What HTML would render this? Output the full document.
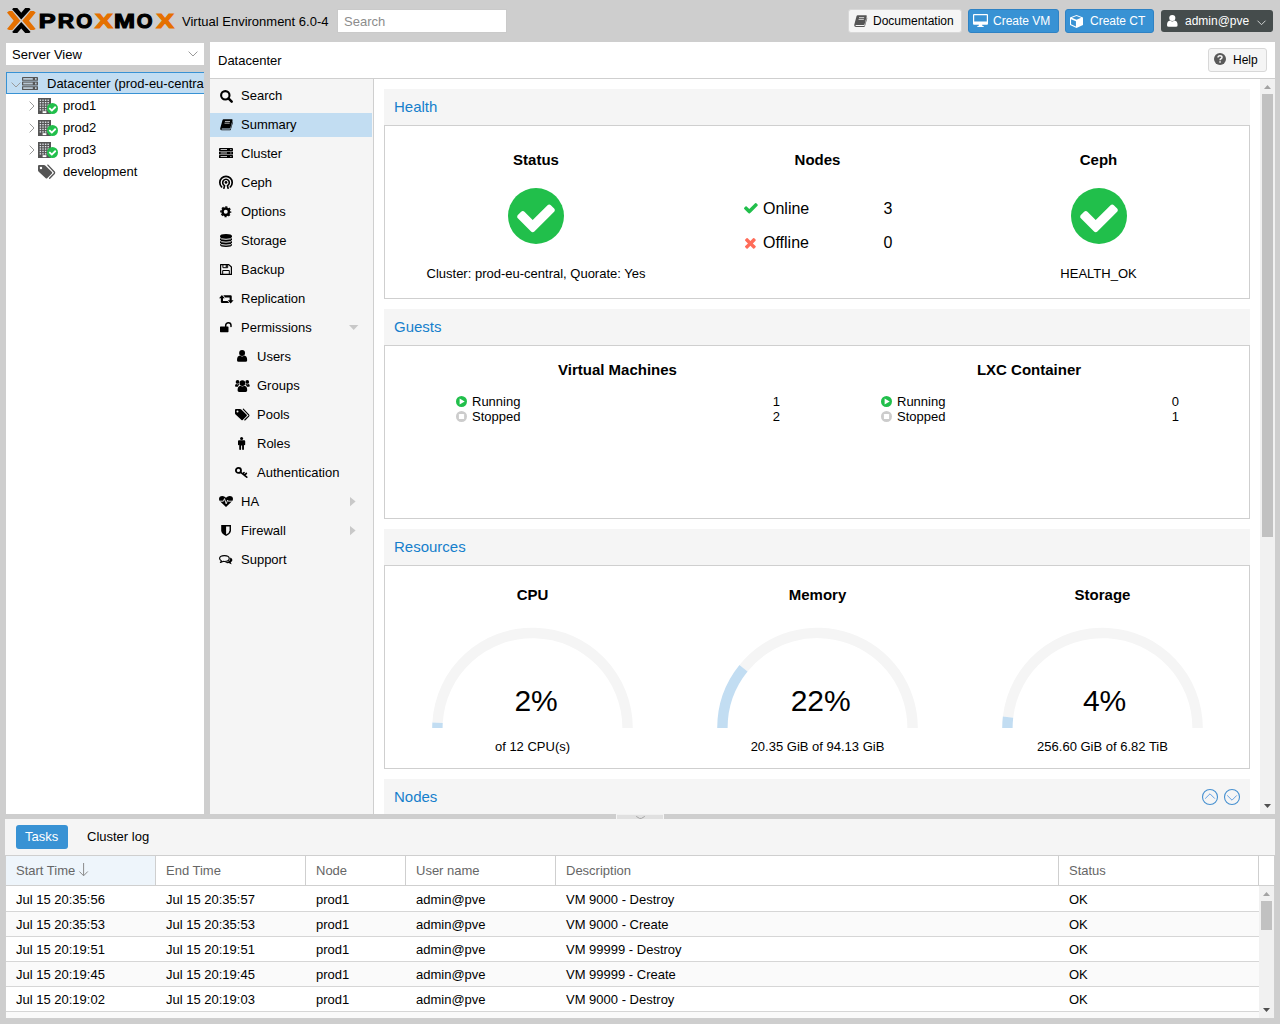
<!DOCTYPE html>
<html lang="en">
<head>
<meta charset="utf-8">
<title>prod1 - Proxmox Virtual Environment</title>
<style>
*{box-sizing:border-box;margin:0;padding:0}
html,body{width:1280px;height:1024px;overflow:hidden}
body{background:#cecece;font-family:"Liberation Sans",Arial,Helvetica,sans-serif;font-size:13px;color:#000;position:relative}
.t{position:absolute;white-space:nowrap}
.b{position:absolute}
.i{position:absolute;display:block;overflow:visible;fill:currentColor}
</style>
</head>
<body>
<svg class="i" style="left:0px;top:0px;" width="180" height="42" viewBox="0 0 180 42" preserveAspectRatio="none"><path d="M7 12.6L9 10.9H12.3L20.3 20.75L12.3 30.1H9L7 28.9L13.7 20.75zM35.7 12.6L33.7 10.9H30.4L22.3 20.75L30.4 30.1H33.7L35.7 28.9L29 20.75z" fill="#e57000"/><path d="M12.1 9.2L13.4 7.9H17.3L21.25 12.8L25.2 7.9H29.2L30.6 9.2L21.25 19.4zM12.1 32L13.4 33.1H17.3L21.25 28.4L25.2 33.1H29.2L30.6 32L21.25 21.9z" fill="#000"/><text y="28.05" font-family='"Liberation Sans",Arial,sans-serif' font-weight="bold" font-size="20" stroke-width="1.15"><tspan x="38.83" textLength="16.84" lengthAdjust="spacingAndGlyphs" fill="#000" stroke="#000">P</tspan><tspan x="57.77" textLength="16.33" lengthAdjust="spacingAndGlyphs" fill="#000" stroke="#000">R</tspan><tspan x="76.36" textLength="15.97" lengthAdjust="spacingAndGlyphs" fill="#000" stroke="#000">O</tspan><tspan x="94.99" textLength="17.7" lengthAdjust="spacingAndGlyphs" fill="#e57000" stroke="#e57000">X</tspan><tspan x="114.12" textLength="21.01" lengthAdjust="spacingAndGlyphs" fill="#000" stroke="#000">M</tspan><tspan x="136.87" textLength="15.74" lengthAdjust="spacingAndGlyphs" fill="#000" stroke="#000">O</tspan><tspan x="156.46" textLength="17.36" lengthAdjust="spacingAndGlyphs" fill="#e57000" stroke="#e57000">X</tspan></text></svg>
<div class="t" style="top:14px;font-size:13px;line-height:15px;left:182px;">Virtual Environment 6.0-4</div>
<div class="b" style="left:338px;top:10px;width:168px;height:22px;background:#fff;box-shadow:0 0 0 1px #cacaca;"></div>
<div class="t" style="top:14px;font-size:13px;line-height:15px;color:#8c8c8c;left:344px;">Search</div>
<div class="b" style="left:848px;top:9px;width:114px;height:24px;background:#f5f5f5;border:1px solid #d8d8d8;border-radius:3px;"></div>
<div class="t" style="top:14px;font-size:12px;line-height:14px;color:#000;left:873px;">Documentation</div>
<svg class="i" style="left:853.5px;top:14.7px;color:#555;" width="13" height="12" viewBox="0 0 13 12" preserveAspectRatio="none"><path d="M3.6 0.3H12q1 0 .75 1L10.6 9.2q-.2.8-1 .8H2.2q-.7 0-.7.55t.7.55H9.9q.5 0 .7-.5L12.9 2.3q.5.6.25 1.4L11 11q-.25.9-1.2.9H1.9Q.2 11.9.2 10.3q0-.5.2-1L2.5 1.2Q2.8.3 3.6.3z"/><path d="M5 2.6h5.2M4.6 4.4h5.2" stroke="#fff" stroke-opacity=".8" stroke-width=".9" fill="none"/></svg>
<div class="b" style="left:968px;top:9px;width:91px;height:24px;background:#3892d4;border:1px solid #2e82c4;border-radius:3px;"></div>
<div class="t" style="top:14px;font-size:12px;line-height:14px;color:#fff;left:993px;">Create VM</div>
<svg class="i" style="left:973px;top:14px;color:#fff;" width="15" height="13" viewBox="0 0 15 13" preserveAspectRatio="none"><path d="M1 0H14Q15 0 15 1V9.7Q15 10.7 14 10.7H9.1L9.5 11.9H10.3Q10.8 11.9 10.8 12.45T10.3 13H4.7Q4.2 13 4.2 12.45T4.7 11.9H5.5L5.9 10.7H1Q0 10.7 0 9.7V1Q0 0 1 0zM1.2 1.2V7.6H13.8V1.2z" fill-rule="evenodd"/></svg>
<div class="b" style="left:1065px;top:9px;width:89px;height:24px;background:#3892d4;border:1px solid #2e82c4;border-radius:3px;"></div>
<div class="t" style="top:14px;font-size:12px;line-height:14px;color:#fff;left:1090px;">Create CT</div>
<svg class="i" style="left:1070px;top:15px;color:#fff;" width="13" height="13" viewBox="0 0 13 13" preserveAspectRatio="none"><path d="M6.5 0L13 2.6V9.9L6.5 13L0 9.9V2.6z"/><path d="M1.9 2.85L6.5 1.05L11.1 2.85L6.5 4.7z" fill="#3892d4"/><path d="M1.05 4.2L5.95 6.2V11.55L1.05 9.2z" fill="#3892d4"/></svg>
<div class="b" style="left:1161px;top:10px;width:112px;height:22px;background:#454c4c;border-radius:3px;"></div>
<div class="t" style="top:14px;font-size:12px;line-height:14px;color:#fff;left:1185px;">admin@pve</div>
<svg class="i" style="left:1167px;top:15.2px;color:#fff;" width="10.6" height="12" viewBox="0 0 10 12" preserveAspectRatio="none"><circle cx="5" cy="3" r="2.9"/><path d="M0 10.2Q0 6 3 5.6Q4 6.5 5 6.5T7 5.6Q10 6 10 10.2Q10 11.8 8.4 11.8H1.6Q0 11.8 0 10.2z"/></svg>
<svg class="i" style="left:1257px;top:19.6px;" width="9" height="6" viewBox="0 0 9 6" preserveAspectRatio="none"><path d="M.5 .7L4.5 4.7L8.5 .7" fill="none" stroke="#cfd2d2" stroke-width="1"/></svg>
<div class="b" style="left:6px;top:43px;width:198px;height:22px;background:#fff;"></div>
<div class="t" style="top:47px;font-size:13px;line-height:15px;left:12px;">Server View</div>
<svg class="i" style="left:188px;top:50.5px;" width="10" height="6" viewBox="0 0 10 6" preserveAspectRatio="none"><path d="M.6 .6L5 5L9.4 .6" fill="none" stroke="#9a9a9a" stroke-width="1"/></svg>
<div class="b" style="left:6px;top:72px;width:198px;height:742px;background:#fff;"></div>
<div class="b" style="left:6px;top:72px;width:198px;height:22px;background:#c2ddf2;border:1px solid #3892d4;border-right:none;"></div>
<svg class="i" style="left:11px;top:81.5px;" width="10" height="6" viewBox="0 0 10 6" preserveAspectRatio="none"><path d="M.6 .6L5 5L9.4 .6" fill="none" stroke="#9a9a9a" stroke-width="1"/></svg>
<svg class="i" style="left:22px;top:77px;" width="16" height="13" viewBox="0 0 16 13" preserveAspectRatio="none"><rect x="0" y="0" width="16" height="3.8" rx=".4" fill="#555"/><rect x="1.2" y="1" width="9.6" height="1.8" fill="#b9c7d3"/><rect x="13" y="1" width="1.6" height="1.8" fill="#b9c7d3"/><rect x="0" y="4.6" width="16" height="3.8" rx=".4" fill="#555"/><rect x="1.2" y="5.6" width="9.6" height="1.8" fill="#b9c7d3"/><rect x="13" y="5.6" width="1.6" height="1.8" fill="#b9c7d3"/><rect x="0" y="9.2" width="16" height="3.8" rx=".4" fill="#555"/><rect x="1.2" y="10.2" width="9.6" height="1.8" fill="#b9c7d3"/><rect x="13" y="10.2" width="1.6" height="1.8" fill="#b9c7d3"/></svg>
<div class="t" style="top:76px;font-size:13px;line-height:15px;left:47px;width:157px;overflow:hidden;">Datacenter (prod-eu-central)</div>
<svg class="i" style="left:29px;top:101px;" width="6" height="10" viewBox="0 0 6 10" preserveAspectRatio="none"><path d="M.6 .6L5 5L.6 9.4" fill="none" stroke="#9a9a9a" stroke-width="1"/></svg>
<svg class="i" style="left:38px;top:98px;" width="13" height="16" viewBox="0 0 13 16" preserveAspectRatio="none"><rect x="0" y="0" width="13" height="16" fill="#555"/><rect x="1.7" y="1.6" width="1.4" height="1.3" fill="#e4e9ee"/><rect x="4.3" y="1.6" width="1.4" height="1.3" fill="#e4e9ee"/><rect x="6.9" y="1.6" width="1.4" height="1.3" fill="#e4e9ee"/><rect x="9.5" y="1.6" width="1.4" height="1.3" fill="#e4e9ee"/><rect x="1.7" y="4" width="1.4" height="1.3" fill="#e4e9ee"/><rect x="4.3" y="4" width="1.4" height="1.3" fill="#e4e9ee"/><rect x="6.9" y="4" width="1.4" height="1.3" fill="#e4e9ee"/><rect x="9.5" y="4" width="1.4" height="1.3" fill="#e4e9ee"/><rect x="1.7" y="6.4" width="1.4" height="1.3" fill="#e4e9ee"/><rect x="4.3" y="6.4" width="1.4" height="1.3" fill="#e4e9ee"/><rect x="6.9" y="6.4" width="1.4" height="1.3" fill="#e4e9ee"/><rect x="9.5" y="6.4" width="1.4" height="1.3" fill="#e4e9ee"/><rect x="1.7" y="8.8" width="1.4" height="1.3" fill="#e4e9ee"/><rect x="4.3" y="8.8" width="1.4" height="1.3" fill="#e4e9ee"/><rect x="6.9" y="8.8" width="1.4" height="1.3" fill="#e4e9ee"/><rect x="9.5" y="8.8" width="1.4" height="1.3" fill="#e4e9ee"/><rect x="1.7" y="11.2" width="1.4" height="1.3" fill="#e4e9ee"/><rect x="4.3" y="11.2" width="1.4" height="1.3" fill="#e4e9ee"/><rect x="6.9" y="11.2" width="1.4" height="1.3" fill="#e4e9ee"/><rect x="9.5" y="11.2" width="1.4" height="1.3" fill="#e4e9ee"/><rect x="4.6" y="13.2" width="3.8" height="1.9" fill="#fff"/></svg>
<svg class="i" style="left:46.9px;top:103px;" width="11" height="11" viewBox="0 0 1536 1536" preserveAspectRatio="none"><circle cx="768" cy="768" r="768" fill="#21bf4b"/><path transform="translate(-128,-128)" fill="#fff" d="M1412 734q0-28-18-46l-91-90q-19-19-45-19t-45 19l-408 407-226-226q-19-19-45-19t-45 19l-91 90q-18 18-18 46 0 27 18 45l362 362q19 19 45 19 27 0 46-19l543-543q18-18 18-45z"/></svg>
<div class="t" style="top:98px;font-size:13px;line-height:15px;left:63px;">prod1</div>
<svg class="i" style="left:29px;top:123px;" width="6" height="10" viewBox="0 0 6 10" preserveAspectRatio="none"><path d="M.6 .6L5 5L.6 9.4" fill="none" stroke="#9a9a9a" stroke-width="1"/></svg>
<svg class="i" style="left:38px;top:120px;" width="13" height="16" viewBox="0 0 13 16" preserveAspectRatio="none"><rect x="0" y="0" width="13" height="16" fill="#555"/><rect x="1.7" y="1.6" width="1.4" height="1.3" fill="#e4e9ee"/><rect x="4.3" y="1.6" width="1.4" height="1.3" fill="#e4e9ee"/><rect x="6.9" y="1.6" width="1.4" height="1.3" fill="#e4e9ee"/><rect x="9.5" y="1.6" width="1.4" height="1.3" fill="#e4e9ee"/><rect x="1.7" y="4" width="1.4" height="1.3" fill="#e4e9ee"/><rect x="4.3" y="4" width="1.4" height="1.3" fill="#e4e9ee"/><rect x="6.9" y="4" width="1.4" height="1.3" fill="#e4e9ee"/><rect x="9.5" y="4" width="1.4" height="1.3" fill="#e4e9ee"/><rect x="1.7" y="6.4" width="1.4" height="1.3" fill="#e4e9ee"/><rect x="4.3" y="6.4" width="1.4" height="1.3" fill="#e4e9ee"/><rect x="6.9" y="6.4" width="1.4" height="1.3" fill="#e4e9ee"/><rect x="9.5" y="6.4" width="1.4" height="1.3" fill="#e4e9ee"/><rect x="1.7" y="8.8" width="1.4" height="1.3" fill="#e4e9ee"/><rect x="4.3" y="8.8" width="1.4" height="1.3" fill="#e4e9ee"/><rect x="6.9" y="8.8" width="1.4" height="1.3" fill="#e4e9ee"/><rect x="9.5" y="8.8" width="1.4" height="1.3" fill="#e4e9ee"/><rect x="1.7" y="11.2" width="1.4" height="1.3" fill="#e4e9ee"/><rect x="4.3" y="11.2" width="1.4" height="1.3" fill="#e4e9ee"/><rect x="6.9" y="11.2" width="1.4" height="1.3" fill="#e4e9ee"/><rect x="9.5" y="11.2" width="1.4" height="1.3" fill="#e4e9ee"/><rect x="4.6" y="13.2" width="3.8" height="1.9" fill="#fff"/></svg>
<svg class="i" style="left:46.9px;top:125px;" width="11" height="11" viewBox="0 0 1536 1536" preserveAspectRatio="none"><circle cx="768" cy="768" r="768" fill="#21bf4b"/><path transform="translate(-128,-128)" fill="#fff" d="M1412 734q0-28-18-46l-91-90q-19-19-45-19t-45 19l-408 407-226-226q-19-19-45-19t-45 19l-91 90q-18 18-18 46 0 27 18 45l362 362q19 19 45 19 27 0 46-19l543-543q18-18 18-45z"/></svg>
<div class="t" style="top:120px;font-size:13px;line-height:15px;left:63px;">prod2</div>
<svg class="i" style="left:29px;top:145px;" width="6" height="10" viewBox="0 0 6 10" preserveAspectRatio="none"><path d="M.6 .6L5 5L.6 9.4" fill="none" stroke="#9a9a9a" stroke-width="1"/></svg>
<svg class="i" style="left:38px;top:142px;" width="13" height="16" viewBox="0 0 13 16" preserveAspectRatio="none"><rect x="0" y="0" width="13" height="16" fill="#555"/><rect x="1.7" y="1.6" width="1.4" height="1.3" fill="#e4e9ee"/><rect x="4.3" y="1.6" width="1.4" height="1.3" fill="#e4e9ee"/><rect x="6.9" y="1.6" width="1.4" height="1.3" fill="#e4e9ee"/><rect x="9.5" y="1.6" width="1.4" height="1.3" fill="#e4e9ee"/><rect x="1.7" y="4" width="1.4" height="1.3" fill="#e4e9ee"/><rect x="4.3" y="4" width="1.4" height="1.3" fill="#e4e9ee"/><rect x="6.9" y="4" width="1.4" height="1.3" fill="#e4e9ee"/><rect x="9.5" y="4" width="1.4" height="1.3" fill="#e4e9ee"/><rect x="1.7" y="6.4" width="1.4" height="1.3" fill="#e4e9ee"/><rect x="4.3" y="6.4" width="1.4" height="1.3" fill="#e4e9ee"/><rect x="6.9" y="6.4" width="1.4" height="1.3" fill="#e4e9ee"/><rect x="9.5" y="6.4" width="1.4" height="1.3" fill="#e4e9ee"/><rect x="1.7" y="8.8" width="1.4" height="1.3" fill="#e4e9ee"/><rect x="4.3" y="8.8" width="1.4" height="1.3" fill="#e4e9ee"/><rect x="6.9" y="8.8" width="1.4" height="1.3" fill="#e4e9ee"/><rect x="9.5" y="8.8" width="1.4" height="1.3" fill="#e4e9ee"/><rect x="1.7" y="11.2" width="1.4" height="1.3" fill="#e4e9ee"/><rect x="4.3" y="11.2" width="1.4" height="1.3" fill="#e4e9ee"/><rect x="6.9" y="11.2" width="1.4" height="1.3" fill="#e4e9ee"/><rect x="9.5" y="11.2" width="1.4" height="1.3" fill="#e4e9ee"/><rect x="4.6" y="13.2" width="3.8" height="1.9" fill="#fff"/></svg>
<svg class="i" style="left:46.9px;top:147px;" width="11" height="11" viewBox="0 0 1536 1536" preserveAspectRatio="none"><circle cx="768" cy="768" r="768" fill="#21bf4b"/><path transform="translate(-128,-128)" fill="#fff" d="M1412 734q0-28-18-46l-91-90q-19-19-45-19t-45 19l-408 407-226-226q-19-19-45-19t-45 19l-91 90q-18 18-18 46 0 27 18 45l362 362q19 19 45 19 27 0 46-19l543-543q18-18 18-45z"/></svg>
<div class="t" style="top:142px;font-size:13px;line-height:15px;left:63px;">prod3</div>
<svg class="i" style="left:38px;top:165px;color:#555;" width="17.4" height="14" viewBox="0 0 14.6 11.7" preserveAspectRatio="none"><path d="M0 .9Q0 0 .9 0H5Q5.7 0 6.3 .6L11.7 5.9Q12.2 6.5 11.7 7.1L7.7 11.1Q7.1 11.6 6.5 11.1L.6 5.6Q0 5 0 4.3z"/><circle cx="2.5" cy="2.5" r="1" fill="#fff"/><path d="M8.3 .1L13.7 5.8Q14.2 6.5 13.7 7.1L9.8 11.1" fill="none" stroke="currentColor" stroke-width="1.15" stroke-linecap="round"/></svg>
<div class="t" style="top:164px;font-size:13px;line-height:15px;left:63px;">development</div>
<div class="b" style="left:210px;top:42px;width:1065px;height:772px;background:#fff;"></div>
<div class="t" style="top:53px;font-size:13px;line-height:15px;left:218px;">Datacenter</div>
<div class="b" style="left:210px;top:78px;width:1065px;height:1px;background:#cfcfcf;"></div>
<div class="b" style="left:1208px;top:48px;width:59px;height:24px;background:#f5f5f5;border:1px solid #d8d8d8;border-radius:3px;"></div>
<svg class="i" style="left:1214px;top:53.1px;color:#595959;" width="12" height="12" viewBox="0 0 12 12" preserveAspectRatio="none"><circle cx="6" cy="6" r="6"/><path d="M4 4.5Q4 2.7 6 2.7Q8 2.7 8 4.3Q8 5.3 7 5.8Q6.1 6.2 6.1 7.2" fill="none" stroke="#f5f5f5" stroke-width="1.5"/><rect x="5.3" y="8.2" width="1.5" height="1.5" fill="#f5f5f5"/></svg>
<div class="t" style="top:53px;font-size:12px;line-height:14px;left:1233px;">Help</div>
<div class="b" style="left:210px;top:79px;width:163px;height:735px;background:#f5f5f5;"></div>
<div class="b" style="left:373px;top:79px;width:1px;height:735px;background:#cfcfcf;"></div>
<div class="b" style="left:210px;top:113px;width:162px;height:24px;background:#c2ddf2;"></div>
<div class="t" style="top:88px;font-size:13px;line-height:15px;left:241px;">Search</div>
<div class="t" style="top:117px;font-size:13px;line-height:15px;left:241px;">Summary</div>
<div class="t" style="top:146px;font-size:13px;line-height:15px;left:241px;">Cluster</div>
<div class="t" style="top:175px;font-size:13px;line-height:15px;left:241px;">Ceph</div>
<div class="t" style="top:204px;font-size:13px;line-height:15px;left:241px;">Options</div>
<div class="t" style="top:233px;font-size:13px;line-height:15px;left:241px;">Storage</div>
<div class="t" style="top:262px;font-size:13px;line-height:15px;left:241px;">Backup</div>
<div class="t" style="top:291px;font-size:13px;line-height:15px;left:241px;">Replication</div>
<div class="t" style="top:320px;font-size:13px;line-height:15px;left:241px;">Permissions</div>
<div class="t" style="top:349px;font-size:13px;line-height:15px;left:257px;">Users</div>
<div class="t" style="top:378px;font-size:13px;line-height:15px;left:257px;">Groups</div>
<div class="t" style="top:407px;font-size:13px;line-height:15px;left:257px;">Pools</div>
<div class="t" style="top:436px;font-size:13px;line-height:15px;left:257px;">Roles</div>
<div class="t" style="top:465px;font-size:13px;line-height:15px;left:257px;">Authentication</div>
<div class="t" style="top:494px;font-size:13px;line-height:15px;left:241px;">HA</div>
<div class="t" style="top:523px;font-size:13px;line-height:15px;left:241px;">Firewall</div>
<div class="t" style="top:552px;font-size:13px;line-height:15px;left:241px;">Support</div>
<svg class="i" style="left:219.7px;top:90px;" width="13" height="13" viewBox="0 0 13 13" preserveAspectRatio="none"><circle cx="5.3" cy="5.3" r="4.2" fill="none" stroke="currentColor" stroke-width="2.1"/><path d="M8.7 8.7L11.7 11.7" stroke="currentColor" stroke-width="2.5" stroke-linecap="round"/></svg>
<svg class="i" style="left:219.6px;top:118.6px;" width="13" height="12" viewBox="0 0 13.2 12.6" preserveAspectRatio="none"><path d="M3.6 0.3H12q1 0 .75 1L10.6 9.2q-.2.8-1 .8H2.2q-.7 0-.7.55t.7.55H9.9q.5 0 .7-.5L12.9 2.3q.5.6.25 1.4L11 11q-.25.9-1.2.9H1.9Q.2 11.9.2 10.3q0-.5.2-1L2.5 1.2Q2.8.3 3.6.3z"/><path d="M5 2.6h5.2M4.6 4.4h5.2" stroke="#fff" stroke-opacity=".8" stroke-width=".9" fill="none"/></svg>
<svg class="i" style="left:219.1px;top:148px;" width="14" height="10.1" viewBox="0 0 14 10.1" preserveAspectRatio="none"><rect x="0" y="0" width="14" height="2.9" rx=".5"/><rect x="1.6" y="1" width="6.4" height=".95" fill="#ffffff" fill-opacity=".8"/><rect x="11.2" y="1" width="1.3" height=".95" fill="#ffffff" fill-opacity=".75"/><rect x="0" y="3.5" width="14" height="2.9" rx=".5"/><rect x="1.6" y="4.5" width="6.4" height=".95" fill="#ffffff" fill-opacity=".8"/><rect x="11.2" y="4.5" width="1.3" height=".95" fill="#ffffff" fill-opacity=".75"/><rect x="0" y="7.1" width="14" height="2.9" rx=".5"/><rect x="1.6" y="8.1" width="6.4" height=".95" fill="#ffffff" fill-opacity=".8"/><rect x="11.2" y="8.1" width="1.3" height=".95" fill="#ffffff" fill-opacity=".75"/></svg>
<svg class="i" style="left:219px;top:174.8px;" width="14" height="14" viewBox="0 0 14 14" preserveAspectRatio="none"><path d="M2.6 11.9A6.2 6.2 0 1 1 11.4 11.9" fill="none" stroke="currentColor" stroke-width="1.7" stroke-linecap="round"/><path d="M4.9 13.3L5.6 10.6A3.3 3.3 0 1 1 8.4 10.6L9.1 13.3" fill="none" stroke="currentColor" stroke-width="1.6" stroke-linecap="round" stroke-linejoin="round"/><circle cx="7" cy="7.4" r="1.35"/></svg>
<svg class="i" style="left:220.3px;top:205.7px;" width="11.5" height="11.5" viewBox="0 0 12 12" preserveAspectRatio="none"><circle cx="6" cy="6" r="3.4" fill="none" stroke="currentColor" stroke-width="2.6"/><circle cx="6" cy="6" r="5.05" fill="none" stroke="currentColor" stroke-width="1.5" stroke-dasharray="2.2 1.766" stroke-dashoffset="1.1"/></svg>
<svg class="i" style="left:220.2px;top:233.8px;" width="12" height="13" viewBox="0 0 12 13" preserveAspectRatio="none"><path d="M0 2.2Q0 0 6 0T12 2.2V10.8Q12 13 6 13T0 10.8z"/><path d="M-.2 3.3Q0 5.3 6 5.3T12.2 3.3" fill="none" stroke="#f5f5f5" stroke-width=".95"/><path d="M-.2 6.2Q0 8.2 6 8.2T12.2 6.2" fill="none" stroke="#f5f5f5" stroke-width=".95"/><path d="M-.2 9.1Q0 11.1 6 11.1T12.2 9.1" fill="none" stroke="#f5f5f5" stroke-width=".95"/></svg>
<svg class="i" style="left:220px;top:264.2px;" width="12" height="11" viewBox="0 0 12 11" preserveAspectRatio="none"><path d="M.6 .6H8.8L11.4 3V10.4H.6z" fill="none" stroke="currentColor" stroke-width="1.2" stroke-linejoin="round"/><path d="M2.9 .7V3.7H7.7V.7M2.7 10.3V6.5H9.3V10.3" fill="none" stroke="currentColor" stroke-width="1"/><rect x="5.7" y="1.1" width="1.2" height="2"/></svg>
<svg class="i" style="left:218.9px;top:294.7px;" width="14.6" height="8.4" viewBox="0 0 15 9" preserveAspectRatio="none"><path d="M3 0L6 3.4H4.1V6.4H8.7L10.6 8.6H3.1Q1.9 8.6 1.9 7.6V3.4H0z"/><path d="M12 9L9 5.6H10.9V2.6H6.3L4.4 .4H11.9Q13.1 .4 13.1 1.4V5.6H15z"/></svg>
<svg class="i" style="left:219.9px;top:321.7px;" width="12.6" height="10.2" viewBox="0 0 12.6 10.2" preserveAspectRatio="none"><rect x="0" y="4.5" width="8.5" height="5.7" rx=".6"/><path d="M5.7 5V3.3A2.65 2.65 0 0 1 11 3.3V4.6" fill="none" stroke="currentColor" stroke-width="1.5" stroke-linecap="round"/></svg>
<svg class="i" style="left:236.8px;top:350.4px;" width="10.2" height="11.8" viewBox="0 0 10 11.8" preserveAspectRatio="none"><circle cx="5" cy="3" r="2.9"/><path d="M0 10.2Q0 6 3 5.6Q4 6.5 5 6.5T7 5.6Q10 6 10 10.2Q10 11.8 8.4 11.8H1.6Q0 11.8 0 10.2z"/></svg>
<svg class="i" style="left:234.5px;top:378.6px;" width="14.8" height="13" viewBox="0 0 15 13" preserveAspectRatio="none"><circle cx="7.5" cy="4.1" r="2.9"/><path d="M2.6 11.3Q2.6 7.2 5.6 6.8Q6.5 7.6 7.5 7.6T9.4 6.8Q12.4 7.2 12.4 11.3Q12.4 13 10.8 13H4.2Q2.6 13 2.6 11.3z"/><circle cx="2.6" cy="2.9" r="1.9"/><circle cx="12.4" cy="2.9" r="1.9"/><path d="M0 6.9Q0 5.2 1.4 5Q2 5.4 2.6 5.4T3.8 5Q4.3 5.1 4.6 5.5Q3.2 6.4 2.9 7.7H1Q0 7.7 0 6.9z"/><path d="M15 6.9Q15 5.2 13.6 5Q13 5.4 12.4 5.4T11.2 5Q10.7 5.1 10.4 5.5Q11.8 6.4 12.1 7.7H14Q15 7.7 15 6.9z"/></svg>
<svg class="i" style="left:234.6px;top:408.8px;" width="14.6" height="11.6" viewBox="0 0 14.6 11.7" preserveAspectRatio="none"><path d="M0 .9Q0 0 .9 0H5Q5.7 0 6.3 .6L11.7 5.9Q12.2 6.5 11.7 7.1L7.7 11.1Q7.1 11.6 6.5 11.1L.6 5.6Q0 5 0 4.3z"/><circle cx="2.5" cy="2.5" r="1" fill="#f5f5f5"/><path d="M8.3 .1L13.7 5.8Q14.2 6.5 13.7 7.1L9.8 11.1" fill="none" stroke="currentColor" stroke-width="1.15" stroke-linecap="round"/></svg>
<svg class="i" style="left:238.3px;top:436.7px;" width="7.2" height="13" viewBox="0 0 7 13" preserveAspectRatio="none"><circle cx="3.5" cy="1.5" r="1.5"/><path d="M.9 3.3H6.1Q7 3.3 7 4.2V7.6Q7 8.2 6.4 8.2T5.8 7.6V12.2Q5.8 13 4.9 13T4 12.2V8.6H3V12.2Q3 13 2.1 13T1.2 12.2V7.6Q1.2 8.2 .6 8.2T0 7.6V4.2Q0 3.3 .9 3.3z"/></svg>
<svg class="i" style="left:235.2px;top:467px;" width="12.8" height="11" viewBox="0 0 12.6 11" preserveAspectRatio="none"><circle cx="3.4" cy="3.4" r="2.5" fill="none" stroke="currentColor" stroke-width="1.8"/><path d="M5.3 5.2L11.6 10.2M9.3 8.4L11.2 6.4M7.6 7L8.9 5.6" fill="none" stroke="currentColor" stroke-width="1.6" stroke-linecap="round"/></svg>
<svg class="i" style="left:219.3px;top:496px;" width="14" height="11" viewBox="0 0 14 11" preserveAspectRatio="none"><path d="M7 11L1.2 5.5Q0 4.3 0 3Q0 0 3.4 0Q5.3 0 7 1.8Q8.7 0 10.6 0Q14 0 14 3Q14 4.3 12.8 5.5z"/><path d="M1 5.2H4.4L5.5 2.6L7.2 7.8L8.6 4.2L9.3 5.2H13" fill="none" stroke="#f5f5f5" stroke-width=".9" stroke-linejoin="round"/></svg>
<svg class="i" style="left:220.9px;top:525px;" width="10.2" height="11" viewBox="0 0 10 11" preserveAspectRatio="none"><path d="M.2 0H9.8V5.6Q9.8 8.8 5 11Q.2 8.8 .2 5.6z"/><path d="M5 1.4H8.4V5.6Q8.4 7.8 5 9.5z" fill="#f5f5f5"/></svg>
<svg class="i" style="left:219.3px;top:554.8px;" width="13.8" height="9.8" viewBox="0 0 14 10" preserveAspectRatio="none"><path d="M5.5 .6C2.8 .6 .6 1.9 .6 3.6C.6 4.6 1.4 5.4 2.5 6Q2.3 6.9 1.4 7.5Q3 7.4 4.1 6.5Q4.8 6.6 5.5 6.6C8.2 6.6 10.4 5.3 10.4 3.6S8.2 .6 5.5 .6z" fill="none" stroke="currentColor" stroke-width="1.15" stroke-linejoin="round"/><path d="M11.3 2.6Q13.6 3.5 13.6 5.2Q13.6 6.6 11.9 7.5Q12.1 8.6 13 9.4Q11.2 9.2 10 8.2Q7.7 8.6 6 7.6Q9.1 7.4 10.6 5.8Q11.7 4.5 11.3 2.6z"/></svg>
<svg class="i" style="left:348.6px;top:325px;" width="9.4" height="5.1" viewBox="0 0 9.4 5.1" preserveAspectRatio="none"><path d="M0 0H9.4L4.7 5.1z" fill="#c8c8c8"/></svg>
<svg class="i" style="left:350.2px;top:496.8px;" width="5.6" height="9.2" viewBox="0 0 5.6 9.2" preserveAspectRatio="none"><path d="M0 0V9.2L5.6 4.6z" fill="#c8c8c8"/></svg>
<svg class="i" style="left:350.2px;top:525.8px;" width="5.6" height="9.2" viewBox="0 0 5.6 9.2" preserveAspectRatio="none"><path d="M0 0V9.2L5.6 4.6z" fill="#c8c8c8"/></svg>
<div class="b" style="left:1260px;top:79px;width:15px;height:735px;background:#f1f1f1;"></div>
<div class="b" style="left:1262px;top:94px;width:11px;height:443px;background:#c1c1c1;"></div>
<svg class="i" style="left:1264px;top:85px;" width="7" height="4" viewBox="0 0 7 4" preserveAspectRatio="none"><path d="M0 4H7L3.5 0z" fill="#a3a3a3"/></svg>
<svg class="i" style="left:1264px;top:804px;" width="7" height="4" viewBox="0 0 7 4" preserveAspectRatio="none"><path d="M0 0H7L3.5 4z" fill="#505050"/></svg>
<div class="b" style="left:384px;top:89px;width:866px;height:36px;background:#f5f5f5;"></div>
<div class="t" style="top:98px;font-size:15px;line-height:17px;color:#157fcc;left:394px;">Health</div>
<div class="b" style="left:384px;top:125px;width:866px;height:174px;background:#fff;border:1px solid #cfcfcf;"></div>
<div class="t" style="top:151px;font-size:15px;line-height:17px;font-weight:bold;left:336px;width:400px;text-align:center;">Status</div>
<div class="t" style="top:151px;font-size:15px;line-height:17px;font-weight:bold;left:617.5px;width:400px;text-align:center;">Nodes</div>
<div class="t" style="top:151px;font-size:15px;line-height:17px;font-weight:bold;left:898.5px;width:400px;text-align:center;">Ceph</div>
<svg class="i" style="left:508px;top:187.8px;" width="56" height="56" viewBox="0 0 1536 1536" preserveAspectRatio="none"><circle cx="768" cy="768" r="768" fill="#21bf4b"/><path transform="translate(-128,-128)" fill="#fff" d="M1412 734q0-28-18-46l-91-90q-19-19-45-19t-45 19l-408 407-226-226q-19-19-45-19t-45 19l-91 90q-18 18-18 46 0 27 18 45l362 362q19 19 45 19 27 0 46-19l543-543q18-18 18-45z"/></svg>
<svg class="i" style="left:1070.7px;top:187.8px;" width="56" height="56" viewBox="0 0 1536 1536" preserveAspectRatio="none"><circle cx="768" cy="768" r="768" fill="#21bf4b"/><path transform="translate(-128,-128)" fill="#fff" d="M1412 734q0-28-18-46l-91-90q-19-19-45-19t-45 19l-408 407-226-226q-19-19-45-19t-45 19l-91 90q-18 18-18 46 0 27 18 45l362 362q19 19 45 19 27 0 46-19l543-543q18-18 18-45z"/></svg>
<div class="t" style="top:266px;font-size:13px;line-height:15px;left:336px;width:400px;text-align:center;">Cluster: prod-eu-central, Quorate: Yes</div>
<div class="t" style="top:266px;font-size:13px;line-height:15px;left:898.5px;width:400px;text-align:center;">HEALTH_OK</div>
<svg class="i" style="left:744px;top:203.3px;" width="13.8" height="10.6" viewBox="121 334 1550 1188" preserveAspectRatio="none"><path d="M1671 566q0 40-28 68l-724 724-136 136q-28 28-68 28t-68-28l-136-136-362-362q-28-28-28-68t28-68l136-136q28-28 68-28t68 28l294 295 656-657q28-28 68-28t68 28l136 136q28 28 28 68z" fill="#21bf4b"/></svg>
<svg class="i" style="left:745.1px;top:237.6px;" width="10.8" height="10.8" viewBox="302 366 1188 1188" preserveAspectRatio="none"><path d="M1490 1322q0 40-28 68l-136 136q-28 28-68 28t-68-28l-294-294-294 294q-28 28-68 28t-68-28l-136-136q-28-28-28-68t28-68l294-294-294-294q-28-28-28-68t28-68l136-136q28-28 68-28t68 28l294 294 294-294q28-28 68-28t68 28l136 136q28 28 28 68t-28 68l-294 294 294 294q28 28 28 68z" fill="#ff6c59"/></svg>
<div class="t" style="top:200px;font-size:16px;line-height:17px;left:763px;">Online</div>
<div class="t" style="top:234px;font-size:16px;line-height:17px;left:763px;">Offline</div>
<div class="t" style="top:200px;font-size:16px;line-height:17px;left:883.6px;">3</div>
<div class="t" style="top:234px;font-size:16px;line-height:17px;left:883.6px;">0</div>
<div class="b" style="left:384px;top:309px;width:866px;height:36px;background:#f5f5f5;"></div>
<div class="t" style="top:318px;font-size:15px;line-height:17px;color:#157fcc;left:394px;">Guests</div>
<div class="b" style="left:384px;top:345px;width:866px;height:174px;background:#fff;border:1px solid #cfcfcf;"></div>
<div class="t" style="top:361px;font-size:15px;line-height:17px;font-weight:bold;left:417.5px;width:400px;text-align:center;">Virtual Machines</div>
<div class="t" style="top:361px;font-size:15px;line-height:17px;font-weight:bold;left:829px;width:400px;text-align:center;">LXC Container</div>
<svg class="i" style="left:456.3px;top:395.8px;" width="11" height="11" viewBox="0 0 11 11" preserveAspectRatio="none"><circle cx="5.5" cy="5.5" r="5.5" fill="#21bf4b"/><path d="M3.6 2.4L8.7 5.5L3.6 8.6z" fill="#fff"/></svg>
<svg class="i" style="left:456.3px;top:411px;" width="11" height="11" viewBox="0 0 11 11" preserveAspectRatio="none"><circle cx="5.5" cy="5.5" r="5.5" fill="#cccccc"/><rect x="2.9" y="2.9" width="5.2" height="5.2" rx=".7" fill="#fff"/></svg>
<div class="t" style="top:394px;font-size:13px;line-height:15px;left:472.0px;">Running</div>
<div class="t" style="top:409px;font-size:13px;line-height:15px;left:472.0px;">Stopped</div>
<div class="t" style="top:394px;font-size:13px;line-height:15px;left:580px;width:200px;text-align:right;">1</div>
<div class="t" style="top:409px;font-size:13px;line-height:15px;left:580px;width:200px;text-align:right;">2</div>
<svg class="i" style="left:881.3px;top:395.8px;" width="11" height="11" viewBox="0 0 11 11" preserveAspectRatio="none"><circle cx="5.5" cy="5.5" r="5.5" fill="#21bf4b"/><path d="M3.6 2.4L8.7 5.5L3.6 8.6z" fill="#fff"/></svg>
<svg class="i" style="left:881.3px;top:411px;" width="11" height="11" viewBox="0 0 11 11" preserveAspectRatio="none"><circle cx="5.5" cy="5.5" r="5.5" fill="#cccccc"/><rect x="2.9" y="2.9" width="5.2" height="5.2" rx=".7" fill="#fff"/></svg>
<div class="t" style="top:394px;font-size:13px;line-height:15px;left:897.0px;">Running</div>
<div class="t" style="top:409px;font-size:13px;line-height:15px;left:897.0px;">Stopped</div>
<div class="t" style="top:394px;font-size:13px;line-height:15px;left:979px;width:200px;text-align:right;">0</div>
<div class="t" style="top:409px;font-size:13px;line-height:15px;left:979px;width:200px;text-align:right;">1</div>
<div class="b" style="left:384px;top:529px;width:866px;height:36px;background:#f5f5f5;"></div>
<div class="t" style="top:538px;font-size:15px;line-height:17px;color:#157fcc;left:394px;">Resources</div>
<div class="b" style="left:384px;top:565px;width:866px;height:204px;background:#fff;border:1px solid #cfcfcf;"></div>
<svg class="i" style="left:0px;top:0px;pointer-events:none;" width="1280" height="1024" viewBox="0 0 1280 1024" preserveAspectRatio="none"><path d="M432.35 722.49A100.3 100.3 0 0 1 632.80 728.00L622.40 728.00A89.9 89.9 0 0 0 442.74 723.06z" fill="#f5f5f5"/><path d="M432.20 728.00A100.3 100.3 0 0 1 432.35 722.49L442.74 723.06A89.9 89.9 0 0 0 442.60 728.00z" fill="#c2ddf2"/></svg>
<div class="t" style="top:586px;font-size:15px;line-height:17px;font-weight:bold;left:332.5px;width:400px;text-align:center;">CPU</div>
<div class="t" style="top:684px;font-size:30px;line-height:33px;left:514.4px;">2%</div>
<div class="t" style="top:739px;font-size:13px;line-height:15px;left:332.5px;width:400px;text-align:center;">of 12 CPU(s)</div>
<svg class="i" style="left:0px;top:0px;pointer-events:none;" width="1280" height="1024" viewBox="0 0 1280 1024" preserveAspectRatio="none"><path d="M739.46 664.99A100.3 100.3 0 0 1 917.80 728.00L907.40 728.00A89.9 89.9 0 0 0 747.55 671.53z" fill="#f5f5f5"/><path d="M717.20 728.00A100.3 100.3 0 0 1 739.46 664.99L747.55 671.53A89.9 89.9 0 0 0 727.60 728.00z" fill="#c2ddf2"/></svg>
<div class="t" style="top:586px;font-size:15px;line-height:17px;font-weight:bold;left:617.5px;width:400px;text-align:center;">Memory</div>
<div class="t" style="top:684px;font-size:30px;line-height:33px;left:790.6999999999999px;">22%</div>
<div class="t" style="top:739px;font-size:13px;line-height:15px;left:617.5px;width:400px;text-align:center;">20.35 GiB of 94.13 GiB</div>
<svg class="i" style="left:0px;top:0px;pointer-events:none;" width="1280" height="1024" viewBox="0 0 1280 1024" preserveAspectRatio="none"><path d="M1002.87 716.46A100.3 100.3 0 0 1 1202.80 728.00L1192.40 728.00A89.9 89.9 0 0 0 1013.20 717.66z" fill="#f5f5f5"/><path d="M1002.20 728.00A100.3 100.3 0 0 1 1002.87 716.46L1013.20 717.66A89.9 89.9 0 0 0 1012.60 728.00z" fill="#c2ddf2"/></svg>
<div class="t" style="top:586px;font-size:15px;line-height:17px;font-weight:bold;left:902.5px;width:400px;text-align:center;">Storage</div>
<div class="t" style="top:684px;font-size:30px;line-height:33px;left:1082.8999999999999px;">4%</div>
<div class="t" style="top:739px;font-size:13px;line-height:15px;left:902.5px;width:400px;text-align:center;">256.60 GiB of 6.82 TiB</div>
<div class="b" style="left:384px;top:779px;width:866px;height:36px;background:#f5f5f5;"></div>
<div class="t" style="top:788px;font-size:15px;line-height:17px;color:#157fcc;left:394px;">Nodes</div>
<div class="b" style="left:384px;top:814px;width:900px;height:10px;background:#cecece;"></div>
<svg class="i" style="left:1202px;top:789px;" width="16" height="16" viewBox="-8 -8 16 16" preserveAspectRatio="none"><circle cx="0" cy="0" r="7.5" fill="none" stroke="#4690d0" stroke-width="1.1"/><path d="M-4.8 1.6L0 -3.2L4.8 1.6" fill="none" stroke="#5a9be0" stroke-width=".95"/></svg>
<svg class="i" style="left:1224px;top:789px;" width="16" height="16" viewBox="-8 -8 16 16" preserveAspectRatio="none"><circle cx="0" cy="0" r="7.5" fill="none" stroke="#4690d0" stroke-width="1.1"/><path d="M-4.8 -1.6L0 3.2L4.8 -1.6" fill="none" stroke="#5a9be0" stroke-width=".95"/></svg>
<div class="b" style="left:0px;top:814px;width:1280px;height:5px;background:#cecece;"></div>
<div class="b" style="left:616px;top:814px;width:48px;height:5px;background:#e0e0e0;border-left:1px solid #f5f5f5;border-right:1px solid #f5f5f5;border-top:1px solid #f0f0f0;"></div>
<svg class="i" style="left:635.8px;top:816px;" width="9" height="3" viewBox="0 0 9 3" preserveAspectRatio="none"><path d="M.2 .4L3.6 2.4H5.4L8.8 .4" fill="none" stroke="#a6a6a6" stroke-width="1"/></svg>
<div class="b" style="left:5px;top:819px;width:1270px;height:200px;background:#f5f5f5;"></div>
<div class="b" style="left:16px;top:825px;width:52px;height:24px;background:#3892d4;border-radius:3px;"></div>
<div class="t" style="top:829px;font-size:13px;line-height:15px;color:#fff;left:25px;">Tasks</div>
<div class="t" style="top:829px;font-size:13px;line-height:15px;left:87px;">Cluster log</div>
<div class="b" style="left:5px;top:855px;width:1270px;height:164px;background:#fff;border:1px solid #cfcfcf;"></div>
<div class="b" style="left:6px;top:856px;width:149px;height:29px;background:#eef5fb;"></div>
<div class="b" style="left:6px;top:885px;width:1268px;height:1px;background:#cfcfcf;"></div>
<div class="t" style="top:863px;font-size:13px;line-height:15px;color:#666;left:16px;">Start Time</div>
<div class="t" style="top:863px;font-size:13px;line-height:15px;color:#666;left:166px;">End Time</div>
<div class="t" style="top:863px;font-size:13px;line-height:15px;color:#666;left:316px;">Node</div>
<div class="t" style="top:863px;font-size:13px;line-height:15px;color:#666;left:416px;">User name</div>
<div class="t" style="top:863px;font-size:13px;line-height:15px;color:#666;left:566px;">Description</div>
<div class="t" style="top:863px;font-size:13px;line-height:15px;color:#666;left:1069px;">Status</div>
<div class="b" style="left:155px;top:856px;width:1px;height:29px;background:#cfcfcf;"></div>
<div class="b" style="left:305px;top:856px;width:1px;height:29px;background:#cfcfcf;"></div>
<div class="b" style="left:405px;top:856px;width:1px;height:29px;background:#cfcfcf;"></div>
<div class="b" style="left:555px;top:856px;width:1px;height:29px;background:#cfcfcf;"></div>
<div class="b" style="left:1058px;top:856px;width:1px;height:29px;background:#cfcfcf;"></div>
<div class="b" style="left:1258px;top:856px;width:1px;height:29px;background:#cfcfcf;"></div>
<svg class="i" style="left:78.8px;top:863.3px;" width="9.2" height="13.4" viewBox="0 0 9.2 13.4" preserveAspectRatio="none"><path d="M4.6 0V12.6M.4 8.5L4.6 12.8L8.8 8.5" fill="none" stroke="#8a8a8a" stroke-width="1"/></svg>
<div class="b" style="left:6px;top:911px;width:1253px;height:1px;background:#d6d6d6;"></div>
<div class="t" style="top:892px;font-size:13px;line-height:15px;left:16px;">Jul 15 20:35:56</div>
<div class="t" style="top:892px;font-size:13px;line-height:15px;left:166px;">Jul 15 20:35:57</div>
<div class="t" style="top:892px;font-size:13px;line-height:15px;left:316px;">prod1</div>
<div class="t" style="top:892px;font-size:13px;line-height:15px;left:416px;">admin@pve</div>
<div class="t" style="top:892px;font-size:13px;line-height:15px;left:566px;">VM 9000 - Destroy</div>
<div class="t" style="top:892px;font-size:13px;line-height:15px;left:1069px;">OK</div>
<div class="b" style="left:6px;top:912px;width:1253px;height:24px;background:#fafafa;"></div>
<div class="b" style="left:6px;top:936px;width:1253px;height:1px;background:#d6d6d6;"></div>
<div class="t" style="top:917px;font-size:13px;line-height:15px;left:16px;">Jul 15 20:35:53</div>
<div class="t" style="top:917px;font-size:13px;line-height:15px;left:166px;">Jul 15 20:35:53</div>
<div class="t" style="top:917px;font-size:13px;line-height:15px;left:316px;">prod1</div>
<div class="t" style="top:917px;font-size:13px;line-height:15px;left:416px;">admin@pve</div>
<div class="t" style="top:917px;font-size:13px;line-height:15px;left:566px;">VM 9000 - Create</div>
<div class="t" style="top:917px;font-size:13px;line-height:15px;left:1069px;">OK</div>
<div class="b" style="left:6px;top:961px;width:1253px;height:1px;background:#d6d6d6;"></div>
<div class="t" style="top:942px;font-size:13px;line-height:15px;left:16px;">Jul 15 20:19:51</div>
<div class="t" style="top:942px;font-size:13px;line-height:15px;left:166px;">Jul 15 20:19:51</div>
<div class="t" style="top:942px;font-size:13px;line-height:15px;left:316px;">prod1</div>
<div class="t" style="top:942px;font-size:13px;line-height:15px;left:416px;">admin@pve</div>
<div class="t" style="top:942px;font-size:13px;line-height:15px;left:566px;">VM 99999 - Destroy</div>
<div class="t" style="top:942px;font-size:13px;line-height:15px;left:1069px;">OK</div>
<div class="b" style="left:6px;top:962px;width:1253px;height:24px;background:#fafafa;"></div>
<div class="b" style="left:6px;top:986px;width:1253px;height:1px;background:#d6d6d6;"></div>
<div class="t" style="top:967px;font-size:13px;line-height:15px;left:16px;">Jul 15 20:19:45</div>
<div class="t" style="top:967px;font-size:13px;line-height:15px;left:166px;">Jul 15 20:19:45</div>
<div class="t" style="top:967px;font-size:13px;line-height:15px;left:316px;">prod1</div>
<div class="t" style="top:967px;font-size:13px;line-height:15px;left:416px;">admin@pve</div>
<div class="t" style="top:967px;font-size:13px;line-height:15px;left:566px;">VM 99999 - Create</div>
<div class="t" style="top:967px;font-size:13px;line-height:15px;left:1069px;">OK</div>
<div class="b" style="left:6px;top:1011px;width:1253px;height:1px;background:#d6d6d6;"></div>
<div class="t" style="top:992px;font-size:13px;line-height:15px;left:16px;">Jul 15 20:19:02</div>
<div class="t" style="top:992px;font-size:13px;line-height:15px;left:166px;">Jul 15 20:19:03</div>
<div class="t" style="top:992px;font-size:13px;line-height:15px;left:316px;">prod1</div>
<div class="t" style="top:992px;font-size:13px;line-height:15px;left:416px;">admin@pve</div>
<div class="t" style="top:992px;font-size:13px;line-height:15px;left:566px;">VM 9000 - Destroy</div>
<div class="t" style="top:992px;font-size:13px;line-height:15px;left:1069px;">OK</div>
<div class="b" style="left:6px;top:1012px;width:1253px;height:6px;background:#fafafa;"></div>
<div class="b" style="left:1259px;top:886px;width:15px;height:132px;background:#f1f1f1;"></div>
<div class="b" style="left:1261px;top:901px;width:11px;height:29px;background:#c1c1c1;"></div>
<svg class="i" style="left:1263px;top:892px;" width="7" height="4" viewBox="0 0 7 4" preserveAspectRatio="none"><path d="M0 4H7L3.5 0z" fill="#a3a3a3"/></svg>
<svg class="i" style="left:1263px;top:1008px;" width="7" height="4" viewBox="0 0 7 4" preserveAspectRatio="none"><path d="M0 0H7L3.5 4z" fill="#505050"/></svg>
</body>
</html>
